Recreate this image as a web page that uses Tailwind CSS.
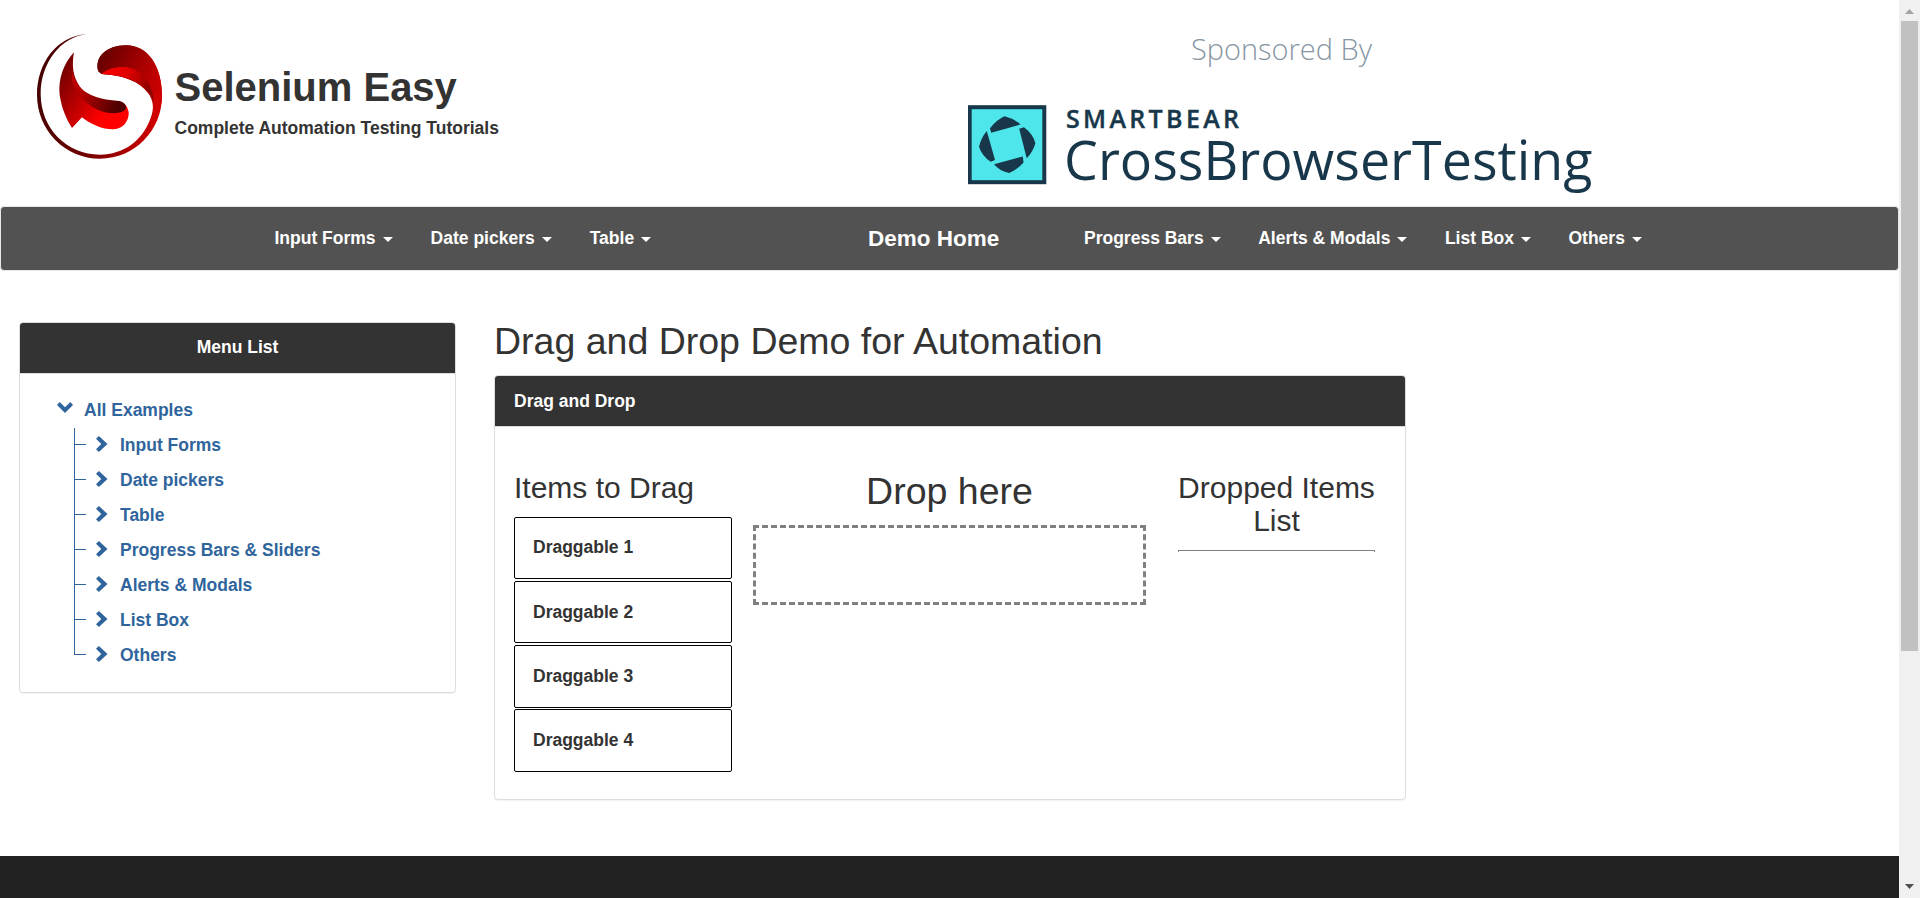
<!DOCTYPE html>
<html lang="en">
<head>
<meta charset="utf-8">
<title>Selenium Easy - Drag and Drop Demo</title>
<script src="https://cdn.jsdelivr.net/npm/@tailwindcss/browser@4"></script>
</head>
<body class="flex h-[898px] w-[1920px] overflow-hidden bg-white font-['Liberation_Sans',Arial,sans-serif] text-[17.5px] leading-[25px] text-[#333]">
<svg class="hidden">
  <symbol id="right" viewBox="0 0 12 16"><path d="M0 2.7 2.9 0 11.5 8 2.9 16 0 13.3 5.3 8Z" fill="#2f659c"/></symbol>
  <symbol id="down" viewBox="0 0 16 12"><path d="M2.7 0 0 2.9 8 11 16 2.9 13.3 0 8 5.3Z" fill="#2f659c"/></symbol>
  <symbol id="caret" viewBox="0 0 10 5"><path d="M0 0H10L5 5Z" fill="#fff"/></symbol>
</svg>
<div class="flex w-[1899px] flex-col">
  <header class="flex h-[206px]">
    <svg class="ml-5 mt-5 h-[150px] w-[154px]" viewBox="0 0 462 450">
      <defs>
        <linearGradient id="ring" x1="0" y1="0.3" x2="1" y2="0.5"><stop offset="0" stop-color="#400"/><stop offset=".5" stop-color="#700000"/><stop offset="1" stop-color="#d00000"/></linearGradient>
        <linearGradient id="top" x1="0" y1="0" x2="1" y2=".6"><stop offset="0" stop-color="#5a0000"/><stop offset=".55" stop-color="#a00000"/><stop offset="1" stop-color="#d00000"/></linearGradient>
        <linearGradient id="fold" x1="0" y1="0" x2="1" y2=".4"><stop offset="0" stop-color="#ff0000"/><stop offset=".5" stop-color="#e00000"/><stop offset="1" stop-color="#8a0000"/></linearGradient>
        <linearGradient id="left" x1="0" y1="0" x2="1" y2=".7"><stop offset="0" stop-color="#5a0000"/><stop offset=".35" stop-color="#a00000"/><stop offset=".8" stop-color="#ff0000"/></linearGradient>
        <linearGradient id="under" x1="0" y1="0" x2="1" y2=".3"><stop offset="0" stop-color="#d00000"/><stop offset=".5" stop-color="#9a0000"/><stop offset="1" stop-color="#500000"/></linearGradient>
      </defs>
      <path d="M200 42C110 48 51 130 51 224C51 330 135 416 240 416C345 416 426 330 426 228C426 140 385 76 318 76C260 76 222 112 235 154C240 160 244 162 252 163C310 165 360 185 385 220C402 245 402 268 392 294C367 364 310 403 240 404C140 404 62 325 62 222C62 130 120 52 200 42Z" fill="url(#ring)"/>
      <path d="M235 154C222 112 260 76 318 76C385 76 426 140 426 228C426 255 415 285 398 300C404 260 400 235 385 220C360 185 310 165 245 162Z" fill="url(#top)"/>
      <path d="M244 162C265 145 290 138 322 142C365 150 398 190 402 248C385 195 330 166 244 162Z" fill="url(#fold)"/>
      <path d="M162 97C130 130 114 180 119 225C125 265 138 295 156 324L186 292C215 315 250 329 280 328C312 326 328 300 326 276C322 256 310 246 298 244C245 244 205 235 180 200C158 170 155 135 162 97Z" fill="url(#left)"/>
      <path d="M157 150C160 185 180 235 298 243C310 246 318 254 319 262C315 278 290 282 262 278C210 268 165 225 157 180Z" fill="url(#under)"/>
    </svg>
    <div class="flex w-[794px] flex-col pl-[0.5px] pt-[65px]">
      <h1 class="text-[40px] font-bold leading-[44px]">Selenium Easy</h1>
      <p class="mt-[7px] font-bold">Complete Automation Testing Tutorials</p>
    </div>
    <svg class="mt-5 h-[180px] w-[640px]" viewBox="968 20 640 180">
      <text x="1191" y="59.5" textLength="181" lengthAdjust="spacingAndGlyphs" font-family="Open Sans" font-weight="300" font-size="30" fill="#8796a3">Sponsored By</text>
      <rect x="969.7" y="107.2" width="74.6" height="75" fill="#4ee5eb" stroke="#18374a" stroke-width="4"/>
      <path d="M1004.5 116.2Q1013 118 1020.5 124.5L991.2 132.7 990 128.3Q996 120 1004.5 116.2ZM1019.2 128.8 1024 127.3Q1033 134 1035.4 143.3 1033 152 1026.7 158.3ZM994 164.3 1022.8 156.5 1023.5 162.5Q1017 170 1009 173 1000 171.5 994 164.3ZM986.8 131 995 160 990.7 161.7Q982 156 979 146.7 981 138 986.8 131Z" fill="#18374a"/>
      <text x="1066" y="127.8" textLength="173" font-family="Open Sans" font-weight="600" font-size="25" fill="#18374a" stroke="#18374a" stroke-width=".4">SMARTBEAR</text>
      <text x="1064" y="180" textLength="528.5" lengthAdjust="spacingAndGlyphs" font-family="Open Sans" font-size="55.5" fill="#18374a">CrossBrowserTesting</text>
    </svg>
  </header>
  <nav class="flex h-[65px] items-center whitespace-nowrap rounded border border-[#e7e7e7] bg-[#525252] font-bold text-white">
    <div class="flex w-[867px] gap-[38px] pl-[273.5px]">
      <div class="flex items-center gap-[7px]">Input Forms<svg class="mt-px h-[5px] w-[10px]"><use href="#caret"/></svg></div>
      <div class="flex items-center gap-[7px]">Date pickers<svg class="mt-px h-[5px] w-[10px]"><use href="#caret"/></svg></div>
      <div class="flex items-center gap-[7px]">Table<svg class="mt-px h-[5px] w-[10px]"><use href="#caret"/></svg></div>
    </div>
    <div class="w-[216px] text-[22.5px] leading-[25px] pb-px">Demo Home</div>
    <div class="flex gap-[37.5px]">
      <div class="flex items-center gap-[7px]">Progress Bars<svg class="mt-px h-[5px] w-[10px]"><use href="#caret"/></svg></div>
      <div class="flex items-center gap-[7px]">Alerts &amp; Modals<svg class="mt-px h-[5px] w-[10px]"><use href="#caret"/></svg></div>
      <div class="flex items-center gap-[7px]">List Box<svg class="mt-px h-[5px] w-[10px]"><use href="#caret"/></svg></div>
      <div class="flex items-center gap-[7px]">Others<svg class="mt-px h-[5px] w-[10px]"><use href="#caret"/></svg></div>
    </div>
  </nav>
  <main class="flex h-[585px] items-start">
    <aside class="ml-[19px] mt-[51px] h-[371px] w-[437px] rounded border border-[#ddd] font-bold shadow-[0_1px_1px_rgba(0,0,0,0.05)]">
      <div class="flex h-[51px] items-center justify-center rounded-t-[3px] border-b border-[#ddd] bg-[#333] pb-px text-white">Menu List</div>
      <div class="pl-[37px] pt-[19px] text-[#2f659c]">
        <div class="flex h-[35px] items-center gap-[11px]"><svg class="mb-[5px] h-[12px] w-4"><use href="#down"/></svg>All Examples</div>
        <ul class="ml-[17px]">
          <li class="flex h-[35px] border-l border-[#2f659c]"><i class="mt-[16px] h-px w-[11px] bg-[#2f659c]"></i><svg class="ml-[10px] mt-[8px] h-4 w-3"><use href="#right"/></svg><span class="ml-[12px] mt-[5px]">Input Forms</span></li>
          <li class="flex h-[35px] border-l border-[#2f659c]"><i class="mt-[16px] h-px w-[11px] bg-[#2f659c]"></i><svg class="ml-[10px] mt-[8px] h-4 w-3"><use href="#right"/></svg><span class="ml-[12px] mt-[5px]">Date pickers</span></li>
          <li class="flex h-[35px] border-l border-[#2f659c]"><i class="mt-[16px] h-px w-[11px] bg-[#2f659c]"></i><svg class="ml-[10px] mt-[8px] h-4 w-3"><use href="#right"/></svg><span class="ml-[12px] mt-[5px]">Table</span></li>
          <li class="flex h-[35px] border-l border-[#2f659c]"><i class="mt-[16px] h-px w-[11px] bg-[#2f659c]"></i><svg class="ml-[10px] mt-[8px] h-4 w-3"><use href="#right"/></svg><span class="ml-[12px] mt-[5px]">Progress Bars &amp; Sliders</span></li>
          <li class="flex h-[35px] border-l border-[#2f659c]"><i class="mt-[16px] h-px w-[11px] bg-[#2f659c]"></i><svg class="ml-[10px] mt-[8px] h-4 w-3"><use href="#right"/></svg><span class="ml-[12px] mt-[5px]">Alerts &amp; Modals</span></li>
          <li class="flex h-[35px] border-l border-[#2f659c]"><i class="mt-[16px] h-px w-[11px] bg-[#2f659c]"></i><svg class="ml-[10px] mt-[8px] h-4 w-3"><use href="#right"/></svg><span class="ml-[12px] mt-[5px]">List Box</span></li>
          <li class="flex h-[35px]"><i class="h-[17px] w-[12px] border-b border-l border-[#2f659c]"></i><svg class="ml-[10px] mt-[8px] h-4 w-3"><use href="#right"/></svg><span class="ml-[12px] mt-[5px]">Others</span></li>
        </ul>
      </div>
    </aside>
    <section class="ml-[38px] mt-[50px] w-[912px]">
      <h2 class="h-[54px] text-[37.5px] leading-[41px]">Drag and Drop Demo for Automation</h2>
      <div class="h-[425px] rounded border border-[#ddd] shadow-[0_1px_1px_rgba(0,0,0,0.05)]">
        <div class="flex h-[51px] items-center rounded-t-[3px] border-b border-[#ddd] bg-[#333] pl-[19px] font-bold text-white">Drag and Drop</div>
        <div class="flex items-start pl-[19px] pt-[44px]">
          <div class="w-[218px]">
            <h3 class="mb-[13px] text-[30px] leading-[33px]">Items to Drag</h3>
            <div class="flex flex-col gap-[2px] font-bold">
              <div class="h-[62px] rounded-[2px] border border-black pl-[18px] pt-[17px]">Draggable 1</div>
              <div class="h-[62px] rounded-[2px] border border-black pl-[18px] pt-[18px]">Draggable 2</div>
              <div class="h-[63px] rounded-[2px] border border-black pl-[18px] pt-[18px]">Draggable 3</div>
              <div class="-mt-px h-[63px] rounded-[2px] border border-black pl-[18px] pt-[18px]">Draggable 4</div>
            </div>
          </div>
          <div class="ml-[21px] w-[393px]">
            <h2 class="text-center text-[37.5px] leading-[41px]">Drop here</h2>
            <div class="mt-[13px] h-[80px] border-3 border-dashed border-[#808080]"></div>
          </div>
          <div class="ml-[32px] w-[197px] text-center">
            <h3 class="-mx-2 text-[30px] leading-[33px]">Dropped Items<br>List</h3>
            <div class="mt-[13px] h-[2px] border border-b-0 border-[#808080]"></div>
          </div>
        </div>
      </div>
    </section>
  </main>
  <footer class="h-[42px] bg-[#222]"></footer>
</div>
<div class="flex w-[21px] flex-col items-center bg-[#f0f0f0]">
  <svg class="h-[21px] w-[21px]" viewBox="0 0 21 21"><path d="M6 14H15L10.5 9Z" fill="#a3a3a3"/></svg>
  <div class="h-[630px] w-[17px] bg-[#c1c1c1]"></div>
  <svg class="mt-auto h-[21px] w-[21px]" viewBox="0 0 21 21"><path d="M6 7H15L10.5 12Z" fill="#505050"/></svg>
</div>
</body>
</html>
